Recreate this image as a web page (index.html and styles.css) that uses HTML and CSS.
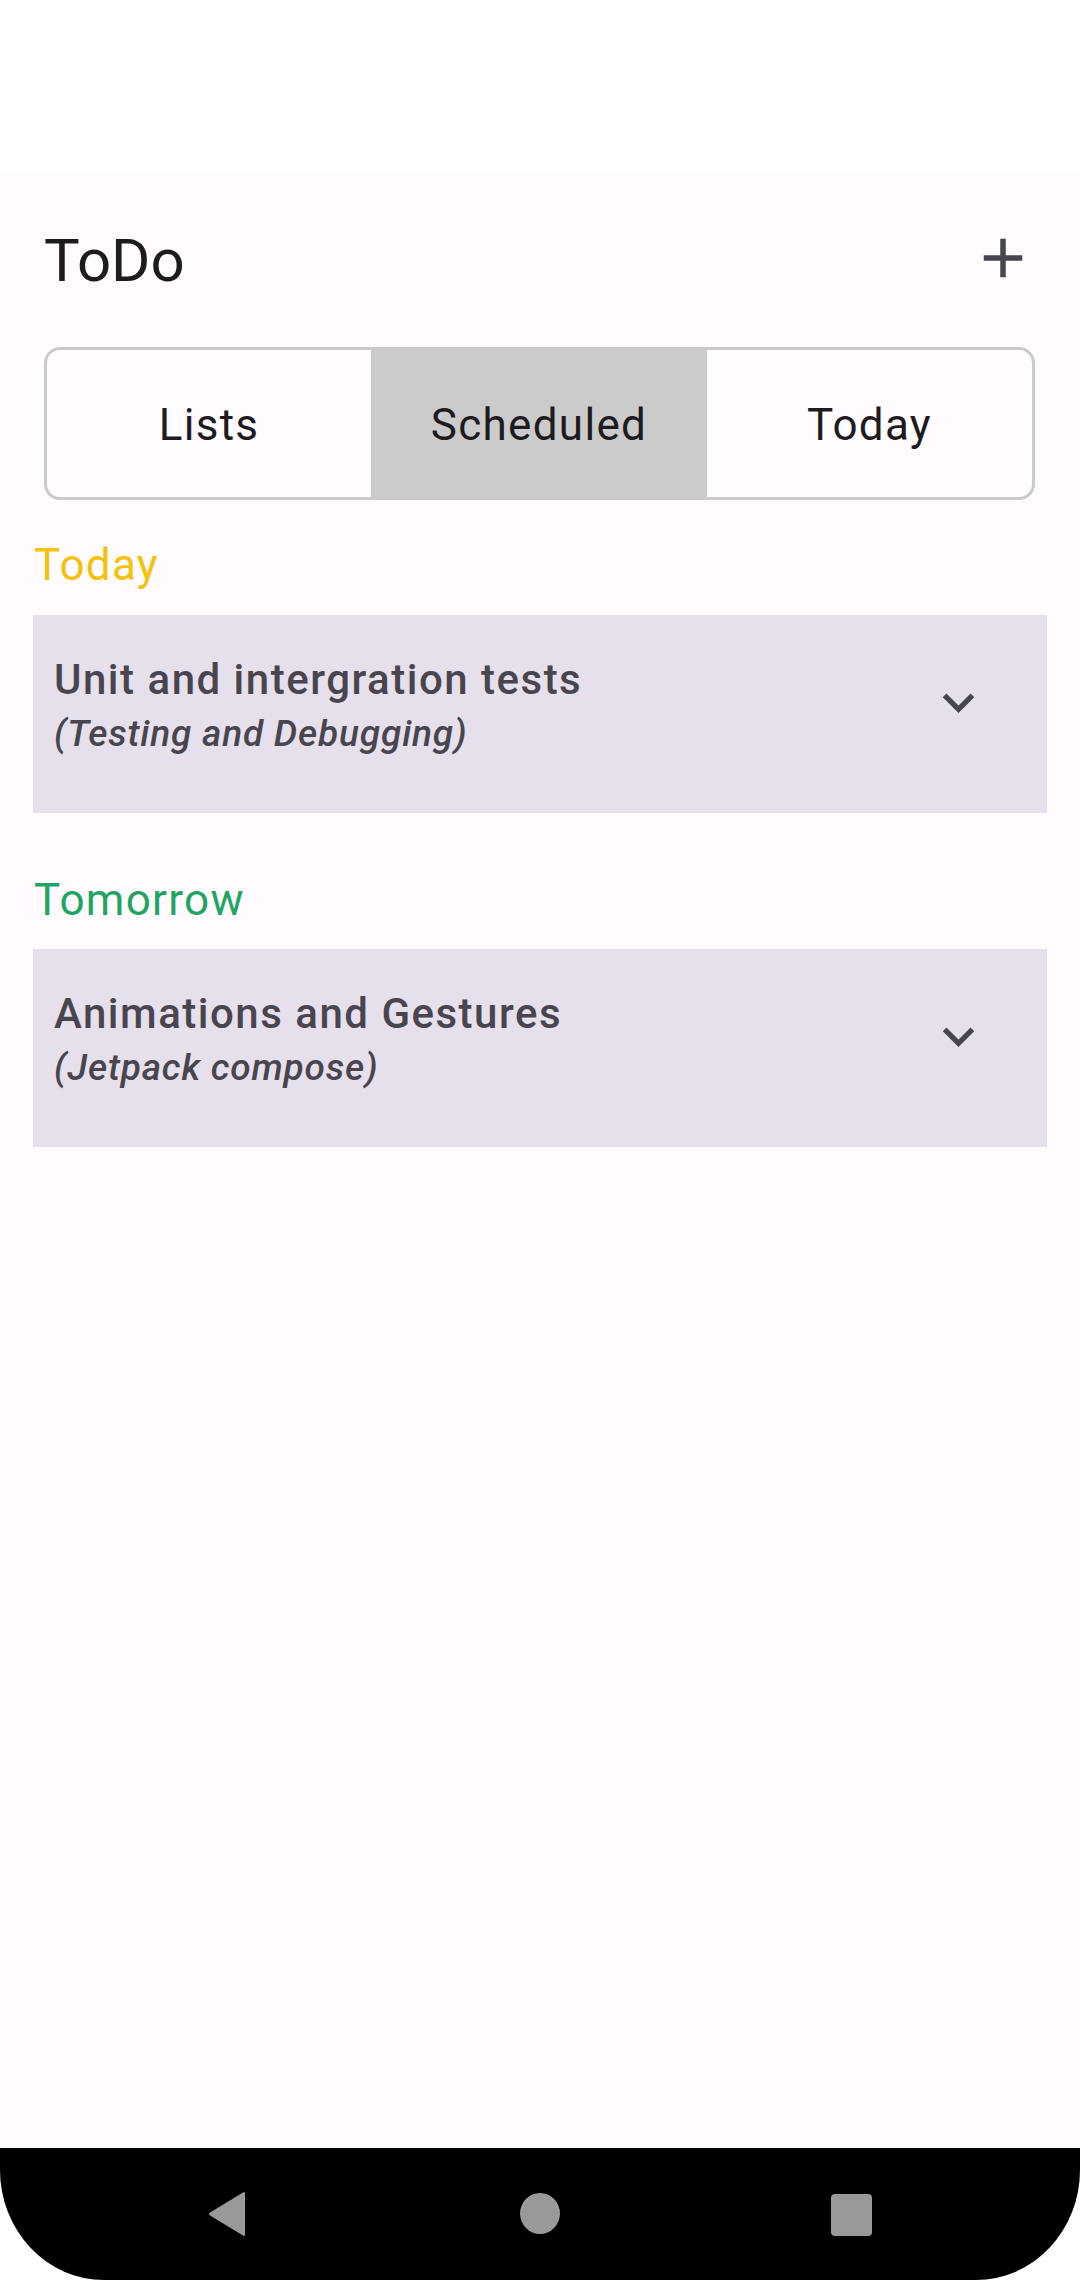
FILE: index.html
```html
<!DOCTYPE html>
<html>
<head>
<meta charset="utf-8">
<link rel="stylesheet" href="styles.css">
</head>
<body>
<div class="screen">
  <div class="status-bar"></div>
  <main class="app">
    <header class="top-bar">
      <h1 class="title">ToDo</h1>
      <svg class="add-icon" viewBox="0 0 24 24"><path d="M19 13h-6v6h-2v-6H5v-2h6V5h2v6h6v2z"/></svg>
    </header>
    <nav class="segmented">
      <div class="segment">Lists</div>
      <div class="segment selected">Scheduled</div>
      <div class="segment">Today</div>
    </nav>
    <section class="group">
      <h2 class="group-label today">Today</h2>
      <div class="card">
        <div class="card-text">
          <div class="card-title">Unit and intergration tests</div>
          <div class="card-sub">(Testing and Debugging)</div>
        </div>
        <svg class="chevron" viewBox="0 0 24 24"><path d="M16.59 8.59L12 13.17 7.41 8.59 6 10l6 6 6-6z"/></svg>
      </div>
    </section>
    <section class="group">
      <h2 class="group-label tomorrow">Tomorrow</h2>
      <div class="card">
        <div class="card-text">
          <div class="card-title">Animations and Gestures</div>
          <div class="card-sub">(Jetpack compose)</div>
        </div>
        <svg class="chevron" viewBox="0 0 24 24"><path d="M16.59 8.59L12 13.17 7.41 8.59 6 10l6 6 6-6z"/></svg>
      </div>
    </section>
  </main>
  <footer class="nav-bar">
    <svg class="nav-back" viewBox="0 0 40 46"><path d="M36 1.5 Q38 0 38 3 L38 43 Q38 46 36 44.5 L3 24.5 Q1 23 3 21.5 Z"/></svg>
    <div class="nav-home"></div>
    <div class="nav-recent"></div>
  </footer>
</div>
</body>
</html>
```

FILE: styles.css
```css
* { box-sizing: border-box; }
html, body {
  margin: 0;
  padding: 0;
  background: #ffffff;
}
body {
  font-family: Roboto, "Noto Sans", sans-serif;
  width: 1080px;
  height: 2280px;
  overflow: hidden;
}
.screen {
  display: flex;
  flex-direction: column;
  height: 2280px;
}
.status-bar {
  height: 171px;
  background: #ffffff;
  flex: none;
}
.app {
  flex: 1;
  background: #fffbfe;
  display: flex;
  flex-direction: column;
}
.top-bar {
  height: 176px;
  display: flex;
  align-items: center;
  justify-content: space-between;
  padding: 0 44px 0 44px;
}
.title {
  margin: 0;
  font-size: 60px;
  line-height: 63px;
  font-weight: 400;
  color: #1d1b20;
  margin-top: 2px;
}
.add-icon {
  width: 66px;
  height: 66px;
  fill: #49454f;
  margin-top: -3px;
}
.segmented {
  margin: 0 45px 0 44px;
  height: 153px;
  border: 3px solid #cacaca;
  border-radius: 16px;
  overflow: hidden;
  display: grid;
  grid-template-columns: 324px 336px 1fr;
}
.segment {
  display: flex;
  align-items: center;
  justify-content: center;
  font-size: 44px;
  letter-spacing: 1.3px;
  color: #1d1b20;
  padding-top: 3px;
}
.segment.selected {
  background: #cbcbcb;
}
.group {
  display: flex;
  flex-direction: column;
}
.group-label {
  margin: 37px 0 22px 34px;
  font-size: 44px;
  line-height: 56px;
  font-weight: 400;
  letter-spacing: 1.3px;
}
.group + .group .group-label {
  margin-top: 59px;
  margin-bottom: 21px;
}
.group-label.today { color: #f4c20d; }
.group-label.tomorrow { color: #1fa463; }
.card {
  margin-left: 33px;
  width: 1014px;
  height: 198px;
  background: #e6e0ec;
  display: flex;
  align-items: flex-start;
  padding: 39px 0 0 21px;
}
.card-text {
  flex: 1;
  color: #49454f;
}
.card-title {
  font-size: 42px;
  line-height: 52px;
  font-weight: 500;
  letter-spacing: 1.5px;
}
.card-sub {
  font-size: 37px;
  line-height: 44px;
  margin-top: 6px;
  font-style: italic;
  font-weight: 500;
  letter-spacing: 0.8px;
}
.chevron {
  width: 63px;
  height: 63px;
  fill: #49454f;
  margin: 17px 57px 0 0;
  flex: none;
}
.nav-bar {
  flex: none;
  height: 132px;
  background: #000000;
  border-radius: 0 0 104px 104px / 0 0 110px 110px;
  display: grid;
  grid-template-columns: repeat(3, 312px);
  justify-content: center;
  align-items: center;
  justify-items: center;
}
.nav-back {
  width: 40px;
  height: 46px;
  fill: #999999;
  margin-left: -2px;
}
.nav-home {
  width: 40px;
  height: 41px;
  border-radius: 50%;
  background: #999999;
  margin-top: -1px;
}
.nav-recent {
  width: 41px;
  height: 42px;
  border-radius: 4px;
  background: #999999;
  margin-left: -2px;
  margin-top: 2px;
}
```
